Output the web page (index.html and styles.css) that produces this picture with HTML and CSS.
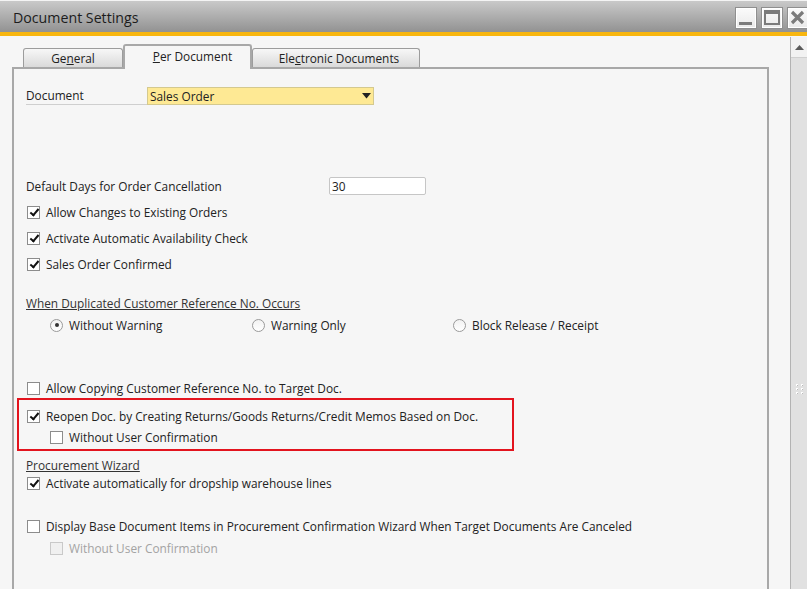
FILE: index.html
```html
<!DOCTYPE html>
<html lang="en">
<head>
    <meta charset="UTF-8">
    <title>Document Settings</title>
    <link rel="stylesheet" href="styles.css">
</head>
<body>
<div class="window">
    <div class="titlebar">
        <span class="title">Document Settings</span>
        <div class="controls">
            <div class="wbtn">
                <svg width="20" height="20" viewBox="0 0 20 20"><rect x="3" y="14" width="13" height="3" fill="#7b7b7b"/></svg>
            </div>
            <div class="wbtn">
                <svg width="20" height="20" viewBox="0 0 20 20"><rect x="3" y="3" width="14" height="13" fill="none" stroke="#7b7b7b" stroke-width="2"/><rect x="3" y="3" width="14" height="3" fill="#7b7b7b"/></svg>
            </div>
            <div class="wbtn">
                <svg width="20" height="20" viewBox="0 0 20 20"><path d="M4 4 L15 15 M15 4 L4 15" stroke="#7b7b7b" stroke-width="3.2"/></svg>
            </div>
        </div>
    </div>
    <div class="accent"></div>

    <div class="client">
        <div class="form-area">
            <div class="tabs">
                <div class="tab tab-general">Ge<u>n</u>eral</div>
                <div class="tab tab-per active"><u>P</u>er Document</div>
                <div class="tab tab-elec">Ele<u>c</u>tronic Documents</div>
            </div>

            <div class="panel">
                <div class="row">
                    <span class="doc-label">Document</span>
                    <div class="combo">
                        <span>Sales Order</span>
                        <svg width="9" height="6" viewBox="0 0 9 6"><path d="M0 0 H9 L4.5 5.5 Z" fill="#222"/></svg>
                    </div>
                </div>

                <div class="row days">
                    <span class="days-label">Default Days for Order Cancellation</span>
                    <div class="textbox">30</div>
                </div>

                <div class="check-list">
                    <div class="row"><span class="box checked"></span>Allow Changes to Existing Orders</div>
                    <div class="row"><span class="box checked"></span>Activate Automatic Availability Check</div>
                    <div class="row"><span class="box checked"></span>Sales Order Confirmed</div>
                </div>

                <div class="row group-title dup-title"><span>When Duplicated Customer Reference No. Occurs</span></div>
                <div class="radios">
                    <div class="radio-item"><span class="radio on"></span>Without Warning</div>
                    <div class="radio-item"><span class="radio"></span>Warning Only</div>
                    <div class="radio-item"><span class="radio"></span>Block Release / Receipt</div>
                </div>

                <div class="row copy-row"><span class="box"></span>Allow Copying Customer Reference No. to Target Doc.</div>

                <div class="highlight">
                    <div class="row"><span class="box checked"></span>Reopen Doc. by Creating Returns/Goods Returns/Credit Memos Based on Doc.</div>
                    <div class="row sub sub-first"><span class="box"></span>Without User Confirmation</div>
                </div>

                <div class="row group-title proc-title"><span>Procurement Wizard</span></div>
                <div class="row"><span class="box checked"></span>Activate automatically for dropship warehouse lines</div>

                <div class="row display-row"><span class="box"></span>Display Base Document Items in Procurement Confirmation Wizard When Target Documents Are Canceled</div>
                <div class="row sub disabled"><span class="box"></span>Without User Confirmation</div>
            </div>
        </div>

        <div class="vscroll">
            <div class="scroll-up">
                <svg width="9" height="5" viewBox="0 0 9 5"><path d="M0 5 L4.5 0 L9 5 Z" fill="#5a5a5a"/></svg>
            </div>
            <div class="grip">
                <svg width="7" height="11" viewBox="0 0 7 11">
                    <rect x="0" y="0" width="2" height="2" fill="#fff"/><rect x="5" y="0" width="2" height="2" fill="#fff"/>
                    <rect x="0" y="4" width="2" height="2" fill="#fff"/><rect x="5" y="4" width="2" height="2" fill="#fff"/>
                    <rect x="0" y="8" width="2" height="2" fill="#fff"/><rect x="5" y="8" width="2" height="2" fill="#fff"/>
                    <rect x="1" y="1" width="1" height="1" fill="#b9b9b9"/><rect x="6" y="1" width="1" height="1" fill="#b9b9b9"/>
                    <rect x="1" y="5" width="1" height="1" fill="#b9b9b9"/><rect x="6" y="5" width="1" height="1" fill="#b9b9b9"/>
                    <rect x="1" y="9" width="1" height="1" fill="#b9b9b9"/><rect x="6" y="9" width="1" height="1" fill="#b9b9b9"/>
                </svg>
            </div>
        </div>
    </div>
</div>
</body>
</html>
```

FILE: styles.css
```css
html, body{
    margin: 0;
    padding: 0;
    overflow: hidden;
}
body{
    font-family: "Open Sans", "Noto Sans", sans-serif;
    font-size: 11.85px;
    color: #222;
    background: #f6f6f6;
}
.window{
    width: 807px;
    height: 589px;
    display: flex;
    flex-direction: column;
    overflow: hidden;
}

/* title bar */
.titlebar{
    height: 31px;
    border-top: 1px solid #f4f4f4;
    background: linear-gradient(#c9c9c9, #929292);
    display: flex;
    align-items: center;
    justify-content: space-between;
    padding-left: 13px;
}
.title{
    font-size: 14.2px;
    color: #1c1c1c;
    margin-top: 2px;
}
.controls{
    display: flex;
    gap: 4px;
    margin-right: -2px;
    margin-top: 3px;
}
.wbtn{
    width: 20px;
    height: 20px;
    border: 1px solid #8f8f8f;
    background: linear-gradient(#fbfbfb, #e9e9e9);
    box-shadow: inset 0 0 0 1px #fff;
}
.wbtn svg{
    display: block;
}
.accent{
    height: 4px;
    background: #f8b60f;
}

/* client area */
.client{
    flex: 1;
    display: flex;
    background: #f6f6f6;
}
.form-area{
    flex: 1;
    padding: 8px 21px 0 12px;
    display: flex;
    flex-direction: column;
}
.tabs{
    display: flex;
    align-items: flex-end;
    height: 25px;
    margin-left: 11px;
    margin-bottom: -2px;
}
.tab{
    height: 19px;
    box-sizing: border-box;
    border: 1px solid #9c9c9c;
    border-bottom: none;
    border-radius: 3px 3px 0 0;
    background: linear-gradient(#f7f7f7, #dadada);
    margin-bottom: 2px;
    display: flex;
    align-items: center;
    justify-content: center;
}
.tab-general{ width: 100px; }
.tab-per{ width: 129px; }
.tab-elec{ width: 168px; padding-left: 6px; }
.tab.active{
    height: 25px;
    margin-bottom: 0;
    background: #f6f6f6;
    border: 2px solid #a8a8a8;
    border-bottom: none;
    position: relative;
    z-index: 1;
    padding: 0 0 4px 10px;
}
.panel{
    flex: 1;
    border: 2px solid #a8a8a8;
    border-bottom: none;
    padding: 18px 0 0 12px;
}

/* rows */
.row{
    display: flex;
    align-items: center;
    height: 18px;
    white-space: nowrap;
}
.doc-label{
    width: 121px;
    height: 17px;
    border-bottom: 1px solid #cfcfcf;
    line-height: 17px;
}
.combo{
    width: 221px;
    height: 16px;
    border: 1px solid #d4c98f;
    background: #fee994;
    display: flex;
    align-items: center;
    justify-content: space-between;
    padding: 0 2px 0 2px;
}
.days{
    margin-top: 72px;
}
.days-label{
    width: 303px;
}
.textbox{
    width: 93px;
    height: 16px;
    line-height: 16px;
    border: 1px solid #c6c6c6;
    border-radius: 2px;
    background: #fff;
    padding-left: 2px;
}
.check-list{
    margin-top: 8px;
    display: flex;
    flex-direction: column;
    gap: 8px;
}

/* checkbox */
.box{
    width: 11px;
    height: 11px;
    border: 1px solid #8c8c8c;
    background: #fff;
    margin: 0 6px 0 1px;
    position: relative;
    flex: none;
}
.box.checked::after{
    content: "";
    position: absolute;
    left: 3.5px;
    top: 0.5px;
    width: 3px;
    height: 7px;
    border-right: 2px solid #111;
    border-bottom: 2px solid #111;
    transform: rotate(40deg);
}
.sub{
    padding-left: 23px;
}
.disabled{
    color: #a3a3a3;
}
.disabled .box{
    border-color: #c9c9c9;
    background: #f0f0f0;
}

/* groups */
.group-title span{
    text-decoration: underline;
    color: #333;
}
.dup-title{
    margin-top: 21px;
}
.radios{
    margin-top: 4px;
    height: 18px;
    padding-left: 24px;
    display: grid;
    grid-template-columns: 202px 201px auto;
    align-items: center;
}
.radio-item{
    display: flex;
    align-items: center;
}
.radio{
    width: 11px;
    height: 11px;
    border: 1px solid #9a9a9a;
    border-radius: 50%;
    background: linear-gradient(#f2f2f2, #fff);
    margin-right: 6px;
    position: relative;
}
.radio.on::after{
    content: "";
    position: absolute;
    left: 3.5px;
    top: 3.5px;
    width: 4px;
    height: 4px;
    border-radius: 50%;
    background: #333;
}
.copy-row{
    margin-top: 45px;
}
.highlight{
    margin: 1px 0 0 -9px;
    width: 477px;
    border: 2px solid #e3141e;
    padding: 7px 8px 3px 8px;
}
.sub-first{
    margin-top: 3px;
}
.highlight .row{
    margin-left: -1px;
}
.proc-title{
    margin-top: 5px;
}
.display-row{
    margin-top: 25px;
}
.display-row + .sub{
    margin-top: 4px;
}

/* scrollbar */
.vscroll{
    width: 16px;
    margin-top: 1px;
    background: #e1e1e1;
    border-left: 1px solid #b3b3b3;
    display: flex;
    flex-direction: column;
    align-items: center;
}
.scroll-up{
    width: 100%;
    height: 20px;
    background: #f2f2f2;
    border-bottom: 1px solid #d0d0d0;
    display: flex;
    align-items: center;
    justify-content: center;
}
.scroll-up svg, .grip svg{
    display: block;
}
.grip{
    margin-top: 326px;
}
```
